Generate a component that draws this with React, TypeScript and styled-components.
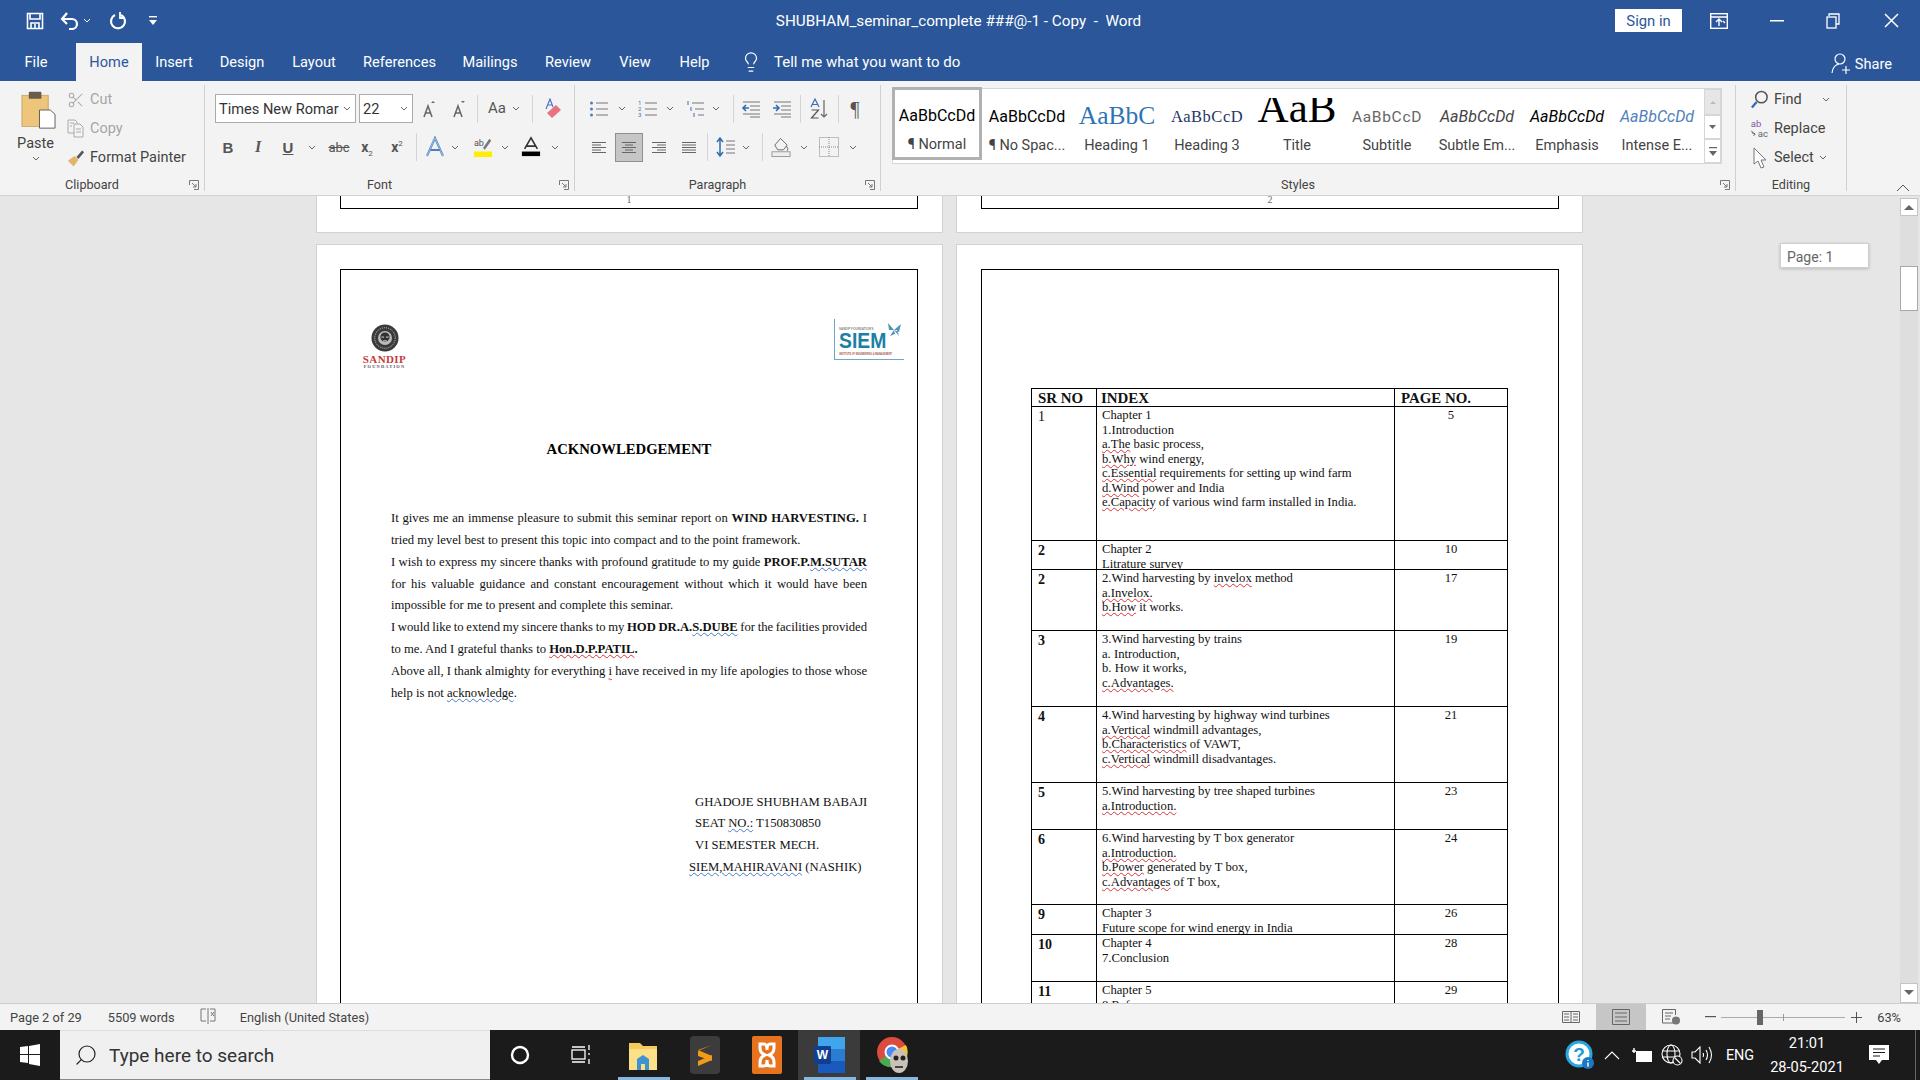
import React from "react";
import styled, { createGlobalStyle } from "styled-components";
import { Lightbulb, Search, Scissors } from "lucide-react";

const Global = createGlobalStyle`
  html, body { margin: 0; padding: 0; width: 1920px; height: 1080px; overflow: hidden; background: #e6e6e6; }
  * { box-sizing: border-box; }
  #root { width: 1920px; height: 1080px; }
`;
const UI = `Roboto, "Liberation Sans", sans-serif`;
const DOC = `"Liberation Serif", "Times New Roman", serif`;

const Shell = styled.div`display:flex;flex-direction:column;width:1920px;height:1080px;overflow:hidden;font-family:${UI};`;
const Blue = styled.header`background:#2b579a;height:81px;display:flex;flex-direction:column;color:#fff;flex:none;`;
const TitleBar = styled.div`height:41px;display:grid;grid-template-columns:1fr 380px 1fr;align-items:center;`;
const Qat = styled.div`display:flex;align-items:center;padding-left:25px;`;
const WinTools = styled.div`display:flex;align-items:center;justify-content:flex-end;`;
const DocTitle = styled.div`font-size:15.25px;text-align:center;white-space:pre;margin-left:-3px;`;
const SignIn = styled.div`width:67px;height:23px;background:#fff;color:#2b579a;font-size:14.8px;display:flex;align-items:center;justify-content:center;margin-right:18px;`;
const WinBtn = styled.div<{ $w: number; $mr?: number }>`width:${p => p.$w}px;margin-right:${p => p.$mr ?? 0}px;display:flex;justify-content:center;align-items:center;`;
const Cell = styled.div<{ $w?: number; $ml?: number; $active?: boolean }>`
  width:${p => p.$w ?? 20}px;margin-left:${p => p.$ml ?? 0}px;height:${p => p.$active ? 29 : 22}px;flex:none;display:flex;align-items:center;justify-content:center;
  color:#555;font-size:14px;
  ${p => p.$active ? "background:#c6c6c6;border:1px solid #8f8f8f;" : ""}
`;
const TabRow = styled.nav`height:40px;display:flex;align-items:flex-end;`;
const Tab = styled.div<{ $w: number; $on?: boolean; $pr?: number }>`
  width:${p => p.$w}px;height:38px;display:flex;align-items:center;justify-content:center;font-size:14.6px;padding:0 ${p => p.$pr ?? 0}px 1px 0;
  ${p => p.$on ? "background:#f3f3f3;color:#2b579a;" : "color:#fff;"}
`;
const TellMe = styled.div`display:flex;align-items:center;gap:12px;height:38px;margin-left:16px;font-size:15px;flex:1;`;
const Share = styled.div`display:flex;align-items:center;gap:4px;height:38px;margin-right:28px;font-size:14.6px;padding-top:3px;`;

const Ribbon = styled.section`height:115px;background:#f3f3f3;border-bottom:1px solid #d2d2d2;display:flex;padding-top:4px;flex:none;color:#444;position:relative;`;
const Group = styled.div<{ $w: number }>`width:${p => p.$w}px;height:106px;border-right:1px solid #d0d0d0;display:flex;flex-direction:column;flex:none;`;
const GroupBody = styled.div<{ $pl?: number }>`height:89px;flex:none;display:flex;padding-left:${p => p.$pl ?? 0}px;`;
const Stack = styled.div<{ $pt?: number }>`display:flex;flex-direction:column;padding-top:${p => p.$pt ?? 0}px;`;
const GroupLabel = styled.div`height:21px;flex:none;display:flex;align-items:center;font-size:12.6px;color:#444;`;
const LabelText = styled.span`flex:1;text-align:center;`;
const Launcher = styled.span`width:20px;display:flex;justify-content:center;`;
const Row = styled.div<{ $h: number }>`height:${p => p.$h}px;display:flex;align-items:center;flex:none;`;
const PasteCol = styled.div`width:61px;margin-left:5px;display:flex;flex-direction:column;align-items:center;padding:6px 0 0 6px;font-size:14.5px;color:#444;`;
const PasteLabel = styled.span`margin:5px 0 0 -6px;line-height:20px;`;
const PasteChev = styled.span`margin:2px 0 0 -6px;display:flex;`;
const ClipRow = styled.div<{ $off?: boolean }>`height:29px;display:flex;align-items:center;gap:5px;font-size:14.5px;color:${p => p.$off ? "#a6a6a6" : "#444"};`;
const ClipIcon = styled.span`width:19px;display:flex;justify-content:center;`;
const FontBox = styled.div<{ $w: number; $ml?: number }>`
  width:${p => p.$w}px;margin-left:${p => p.$ml ?? 0}px;height:29px;background:#fff;border:1px solid #ababab;display:flex;align-items:center;justify-content:space-between;
  padding:0 4px 0 3px;font-size:14.6px;color:#333;white-space:nowrap;overflow:hidden;flex:none;
`;
const Sep = styled.div<{ $ml: number; $h?: number }>`width:1px;height:${p => p.$h ?? 28}px;margin-left:${p => p.$ml}px;background:#d4d4d4;flex:none;`;
const Letter = styled.span<{ $s?: number; $b?: boolean; $i?: boolean; $u?: boolean; $st?: boolean; $f?: string }>`
  font-size:${p => p.$s ?? 15}px;font-weight:${p => p.$b ? 700 : 400};font-style:${p => p.$i ? "italic" : "normal"};
  text-decoration:${p => p.$u ? "underline" : p.$st ? "line-through" : "none"};color:#555;line-height:1;white-space:nowrap;
  ${p => p.$f ? `font-family:${p.$f};` : ""}
  sub, sup { font-size:8px; font-weight:400; line-height:0; }
`;
const Gallery = styled.div`margin:3px 0 0 11px;width:830px;height:76px;background:#fff;border:1px solid #d6d6d6;display:flex;flex:none;`;
const StyleItem = styled.div<{ $on?: boolean }>`
  width:90px;flex:none;height:74px;display:flex;flex-direction:column;align-items:center;overflow:hidden;
  ${p => p.$on ? "border:3px solid #b1b1b1;margin:-2px 0 0 -1px;height:73px;" : "padding-top:2px;"}
`;
const Preview = styled.div<{ $f?: string; $s: number; $c?: string; $i?: boolean; $ls?: number; $pb?: number; $clip?: number }>`
  height:${p => 34 - (p.$clip ?? 0)}px;width:78px;flex:none;display:flex;align-items:flex-end;justify-content:center;overflow:hidden;white-space:nowrap;margin-top:${p => 5 + (p.$clip ?? 0)}px;line-height:1;padding-bottom:${p => p.$pb ?? 5}px;
  font-family:${p => p.$f ?? UI};font-size:${p => p.$s}px;color:${p => p.$c ?? "#000"};font-style:${p => p.$i ? "italic" : "normal"};letter-spacing:${p => p.$ls ?? 0}px;
`;
const StyleName = styled.div`font-size:14.5px;color:#444;margin-top:7px;white-space:nowrap;line-height:18px;`;
const GalleryScroll = styled.div`margin-left:2px;width:18px;display:flex;flex-direction:column;`;
const ScrollPart = styled.div<{ $h: number; $off?: boolean }>`height:${p => p.$h}px;border:1px solid #d6d6d6;background:${p => p.$off ? "#e6e6e6" : "#fff"};display:flex;align-items:center;justify-content:center;`;
const EditRow = styled.div`height:29px;display:flex;align-items:center;gap:5px;font-size:14.5px;color:#444;padding-left:14px;`;
const Collapse = styled.span`position:absolute;right:10px;bottom:3px;display:flex;`;

const Canvas = styled.main`flex:1;min-height:0;display:flex;background:#e6e6e6;overflow:hidden;position:relative;`;
const DocArea = styled.div`flex:1;min-width:0;overflow:hidden;padding-left:316px;display:grid;grid-template-columns:627px 627px;column-gap:13px;grid-template-rows:37px 1fr;row-gap:11px;`;
const Page = styled.div<{ $stub?: boolean; $right?: boolean }>`
  background:#fff;border:1px solid #d2d2d2;
  ${p => p.$stub ? "border-top:none;" : "height:900px;"}
  padding:${p => p.$stub ? 0 : 24}px ${p => p.$right ? 23 : 24}px 0 ${p => p.$right ? 24 : 23}px;
`;
const StubFrame = styled.div`height:13px;border:solid #000;border-width:0 1.5px 1.5px;text-align:center;font:10px/8px ${DOC};color:#666;`;
const Frame = styled.div`border:1.5px solid #000;height:860px;`;
const Logos = styled.div`display:flex;justify-content:space-between;align-items:flex-start;padding:54px 13px 0 20px;height:100px;`;
const SandipLogo = styled.div`width:47px;display:flex;flex-direction:column;align-items:center;`;
const SandipName = styled.div`font:700 11px/10px ${DOC};color:#c9383a;letter-spacing:.4px;margin-top:2px;`;
const SandipSub = styled.div`font:700 4.4px/5px ${DOC};color:#555;letter-spacing:1.2px;white-space:nowrap;`;
const SiemLogo = styled.div`width:70px;height:41px;border-left:1px solid #6fa8c7;border-bottom:1px solid #6fa8c7;display:flex;flex-direction:column;padding:9px 0 0 4px;position:relative;margin-top:-5px;`;
const SiemTiny = styled.div`font:700 3px/3px "Liberation Sans",sans-serif;color:#888;white-space:nowrap;`;
const SiemName = styled.div`font:700 22px/20px "Liberation Sans",sans-serif;color:#1b7fa6;transform:scaleX(.88);transform-origin:left;`;
const SiemSub = styled.div`font:700 3px/5px "Liberation Sans",sans-serif;color:#a55;white-space:nowrap;margin-top:1px;transform:scaleX(.78);transform-origin:left;`;
const SiemWing = styled.svg`position:absolute;right:1px;top:2px;`;
const Heading = styled.h1`font:700 14.7px/18px ${DOC};color:#000;text-align:center;margin:70px 0 0;`;
const Body = styled.div`margin:50px 50px 0;font:12.66px/21.85px ${DOC};color:#111;`;
const Para = styled.div`text-align:justify;text-align-last:left;`;
const JLine = styled.div<{ $ws?: number }>`text-align:justify;text-align-last:justify;white-space:nowrap;word-spacing:${p => p.$ws ?? 0}px;`;
const Sig = styled.div`margin:87px 0 0 354px;font:12.66px/21.85px ${DOC};color:#111;white-space:nowrap;`;
const SigShift = styled.div`margin-left:-6px;`;
const Sq = styled.span<{ $b?: boolean }>`text-decoration:underline wavy ${p => p.$b ? "#4a78c8" : "#d8333a"} 1px;text-underline-offset:1px;`;
const Table = styled.table`border-collapse:collapse;table-layout:fixed;width:476px;margin:118px 0 0 49px;font:12.65px/14.55px ${DOC};color:#111;`;
const Td = styled.td`border:1px solid #000;padding:0;vertical-align:top;`;
const CellBox = styled.div<{ $h: number; $center?: boolean }>`height:${p => p.$h}px;overflow:hidden;padding:1px 2px 0 5px;white-space:nowrap;${p => p.$center ? "text-align:center;padding-left:2px;" : ""}`;
const Head = styled.div<{ $ml?: number }>`font:700 14.9px/16px ${DOC};color:#111;margin-left:${p => p.$ml ?? 0}px;`;
const Sr = styled.div<{ $b?: boolean }>`font:${p => p.$b ? 700 : 400} 14px/16px ${DOC};color:#111;padding:1px 0 0 1px;`;
const Line = styled.div``;

const Scrollbar = styled.aside`width:20px;flex:none;padding:2px 2px 0 0;display:flex;flex-direction:column;background:#e6e6e6;`;
const SbTrack = styled.div`flex:1;background:#dedede;padding-top:50px;`;
const SbBtn = styled.div<{ $h: number }>`height:${p => p.$h}px;flex:none;background:#fff;border:1px solid #c4c4c4;display:flex;align-items:center;justify-content:center;`;
const SbThumb = styled.div`height:45px;background:#fff;border:1px solid #a8a8a8;`;
const PageTip = styled.div`position:absolute;left:1780px;top:47px;width:89px;height:25px;background:#fff;border:1px solid #cfcfcf;box-shadow:0 1px 3px rgba(0,0,0,.2);font-size:14px;color:#666;padding:5px 0 0 6px;`;

const Status = styled.footer`height:27px;background:#f3f3f3;border-top:1px solid #cdcdcd;display:flex;align-items:center;flex:none;font-size:12.8px;color:#444;`;
const StatusText = styled.span<{ $ml: number }>`margin-left:${p => p.$ml}px;white-space:nowrap;`;
const ViewBtn = styled.div<{ $w: number; $on?: boolean }>`width:${p => p.$w}px;height:26px;display:flex;align-items:center;justify-content:center;flex:none;${p => p.$on ? "background:#c6c6c6;" : ""}`;
const Grow = styled.div`flex:1;`;
const Slider = styled.div`width:124px;height:1px;background:#aaa;margin:0 5px;position:relative;`;
const Thumb = styled.i`position:absolute;left:36px;top:-7px;width:6px;height:15px;background:#666;`;
const Tick = styled.i`position:absolute;left:62px;top:-3px;width:1px;height:7px;background:#999;`;

const Taskbar = styled.footer`height:50px;background:#1b1b1b;display:flex;align-items:center;flex:none;color:#fff;`;
const TbCell = styled.div<{ $w: number }>`width:${p => p.$w}px;height:50px;display:flex;align-items:center;justify-content:center;flex:none;`;
const SearchBox = styled.div`width:430px;height:50px;background:#f0f0f0;display:flex;align-items:center;gap:11px;padding-left:14px;color:#333;font-size:19px;flex:none;border-top:1px solid #ddd;border-bottom:1px solid #888;`;
const AppCell = styled.div<{ $open?: boolean; $active?: boolean; $pl?: number }>`
  width:62px;height:50px;display:flex;align-items:center;justify-content:center;flex:none;position:relative;padding-left:${p => p.$pl ?? 0}px;
  ${p => p.$active ? "background:#3b3b3b;" : ""}
  ${p => p.$open ? "&::after{content:'';position:absolute;left:6px;right:4px;bottom:0;height:3px;background:#86b9e0;}" : ""}
`;
const Eng = styled.div`width:46px;text-align:center;font-size:14.4px;color:#fff;flex:none;`;
const Clock = styled.div`width:88px;text-align:center;font-size:14.6px;line-height:24px;flex:none;`;
const DeskEdge = styled.div`width:13px;height:50px;flex:none;border-left:0;position:relative;&::before{content:'';position:absolute;left:8px;top:0;bottom:0;width:1px;background:#666;}`;

const Chev = ({ c = "#666" }: { c?: string }) => <svg width="8" height="5" viewBox="0 0 8 5"><path d="M1 1l3 3 3-3" fill="none" stroke={c} strokeWidth="1" /></svg>;
const Launch = () => <svg width="10" height="10" viewBox="0 0 10 10" fill="none" stroke="#777"><path d="M.5 5V.5H9.5V9.5H5" /><path d="M3 3l4 4M7 4v3H4" /></svg>;
const Lines = ({ k }: { k: "l" | "c" | "r" | "j" }) => {
  const w: number[] = k === "j" ? [14, 14, 14, 14, 14] : k === "c" ? [14, 8, 14, 8, 14] : [14, 9, 14, 9, 14];
  return <svg width="16" height="14" viewBox="0 0 16 14" stroke="#666">{w.map((n, i) => {
    const x = k === "l" ? 1 : k === "r" ? 15 - n : (16 - n) / 2;
    return <path key={i} d={`M${x} ${2.5 + i * 2.5}h${n}`} />;
  })}</svg>;
};
const Fnt = ({ up }: { up: boolean }) => <svg width="14" height="18" viewBox="0 0 14 18"><path d="M2 17L6 6l4 11M3.5 13h5" fill="none" stroke="#666" strokeWidth="1.5" /><path d={up ? "M9 3l2-2 2 2z" : "M9 1h4l-2 2z"} fill="#666" /></svg>;
const Bullets = ({ n }: { n?: boolean }) => <svg width="20" height="20" viewBox="0 0 20 20">
  {[4, 10, 16].map((y, i) => <g key={y}><path d={`M7 ${y}h12`} stroke="#777" />{n ? <text x="0" y={y + 2} fontSize="6" fill="#3f6fb0" fontFamily="Roboto">{i + 1}</text> : <circle cx="2.5" cy={y} r="1.5" fill="#4f7db8" />}</g>)}
</svg>;
const Multi = () => <svg width="20" height="20" viewBox="0 0 20 20" stroke="#777"><path d="M5 4h12M8 10h9M11 16h6" /><path d="M1 2v4M4 8v4M7 14v4" stroke="#3f6fb0" /></svg>;
const Indent = ({ inc }: { inc?: boolean }) => <svg width="20" height="18" viewBox="0 0 20 18" stroke="#777"><path d="M2 2h17M9 6h10M9 10h10M2 14h17M9 17h10" /><path d={inc ? "M1 8h5M4 5l3 3-3 3" : "M8 8H3M5 5L2 8l3 3"} fill="none" stroke="#2f6db5" strokeWidth="1.6" /></svg>;
const Sort = () => <svg width="20" height="22" viewBox="0 0 20 22"><path d="M1 9l4-8 4 8M2.5 6.5h5" fill="none" stroke="#3f6fb0" strokeWidth="1.2" /><path d="M1.5 12h7l-7 8h7" fill="none" stroke="#555" strokeWidth="1.2" /><path d="M14 2v17M11 16l3 3 3-3" fill="none" stroke="#666" strokeWidth="1.2" /></svg>;
const LineSp = () => <svg width="20" height="22" viewBox="0 0 20 22"><path d="M4 2v18M1 6l3-4 3 4M1 16l3 4 3-4" fill="none" stroke="#2f6db5" strokeWidth="1.5" /><path d="M10 5h9M10 9h9M10 13h9M10 17h9" stroke="#777" /></svg>;
const Shade = () => <svg width="21" height="22" viewBox="0 0 21 22"><path d="M10 2l7 7-4 5H7L4 9z" fill="none" stroke="#666" /><path d="M16 10q3 3 1 5" fill="none" stroke="#666" /><rect x="1" y="16" width="19" height="5" fill="#eee" stroke="#999" /></svg>;
const Borders = () => <svg width="20" height="20" viewBox="0 0 20 20" stroke="#888" strokeDasharray="1 1" fill="none"><rect x=".5" y=".5" width="19" height="19" /><path d="M10 0v20M0 10h20" /></svg>;
const Clear = () => <svg width="20" height="22" viewBox="0 0 20 22"><path d="M4 11L8 1l3 8M5 7h5" fill="none" stroke="#4a78c8" strokeWidth="1.2" /><path d="M5 15l9-8 5 5-9 8z" fill="#e8727f" /></svg>;
const HL = () => <svg width="22" height="24" viewBox="0 0 22 24"><text x="1" y="11" fontSize="10" fill="#555" fontFamily="Roboto">ab</text><path d="M11 13l7-10 2 2-7 10z" fill="#777" /><rect x="1" y="17" width="20" height="6" fill="#ffee00" /></svg>;
const FontA = () => <svg width="22" height="24" viewBox="0 0 22 24"><path d="M4 14L11 2l7 12M6 11h10" fill="none" stroke="#333" strokeWidth="1.8" /><rect x="1" y="17" width="20" height="5" fill="#000" /></svg>;
const TextFx = () => <svg width="20" height="24" viewBox="0 0 20 24"><path d="M2 21L10 3l8 18M5.5 15h9" fill="none" stroke="#4a7fc0" strokeWidth="2" /><path d="M2 21L10 3l8 18" fill="none" stroke="#d7e6f6" strokeWidth=".6" /></svg>;

const Paste = () => <svg width="35" height="38" viewBox="0 0 36 44" preserveAspectRatio="none"><rect x="1" y="5" width="27" height="36" fill="#edc67c" stroke="#c9a565" /><rect x="8" y="1" width="13" height="8" rx="1" fill="#6b5b4a" /><path d="M19 22h11l5 5v16H19z" fill="#fff" stroke="#555" /></svg>;
const CopyI = () => <svg width="17" height="19" viewBox="0 0 17 19" fill="none" stroke="#aaa"><path d="M1 1h7l2 2v11H1z" /><path d="M7 5h6l3 3v10H7z" fill="#f3f3f3" /><path d="M3 4h4M3 7h2M9 10h5M9 13h5" /></svg>;
const Painter = () => <svg width="20" height="20" viewBox="0 0 20 20"><path d="M11 9l6-7 2 2-6 7z" fill="#555" /><path d="M2 13l7-5 4 4-5 7z" fill="#e2b56b" /></svg>;
const FindI = () => <svg width="20" height="22" viewBox="0 0 20 22" fill="none"><circle cx="12" cy="8" r="6" stroke="#555" strokeWidth="1.6" /><path d="M7 13l-5 6" stroke="#2f6db5" strokeWidth="2.4" /></svg>;
const ReplaceI = () => <svg width="22" height="22" viewBox="0 0 22 22"><text x="1" y="9" fontSize="11" fill="#7a5ba8" fontFamily="Roboto">ab</text><text x="9" y="20" fontSize="11" fill="#666" fontFamily="Roboto">ac</text><path d="M2 13q0 4 4 4M4 15l2 2-2 2" fill="none" stroke="#555" /></svg>;
const SelectI = () => <svg width="18" height="22" viewBox="0 0 18 22"><path d="M3 1v16l4-3 3 7 3-1-3-7h5z" fill="#fff" stroke="#777" /></svg>;

const SaveI = () => <svg width="18" height="18" viewBox="0 0 18 18" fill="none" stroke="#fff" strokeWidth="1.6"><path d="M1.5 1.5h15v15h-15z" /><path d="M4 2v5h10V2M5 16v-5h8v5" /><path d="M9 12v4" /></svg>;
const UndoI = () => <svg width="20" height="18" viewBox="0 0 20 18" fill="none" stroke="#fff" strokeWidth="2.2"><path d="M2 7h10a5 5 0 010 10H9" /><path d="M7 1L2 7l5 5" /></svg>;
const RedoI = () => <svg width="18" height="20" viewBox="0 0 18 20" fill="none" stroke="#fff" strokeWidth="2.2"><path d="M6 4a7 7 0 106 0" /><path d="M11 1v6h5" strokeWidth="1.8" /></svg>;
const CustomI = () => <svg width="8" height="10" viewBox="0 0 8 10" fill="#fff"><rect y="0" width="8" height="1.4" /><path d="M0 4h8L4 9z" /></svg>;
const RibbonOpt = () => <svg width="18" height="16" viewBox="0 0 18 16" fill="none" stroke="#fff" strokeWidth="1.4"><rect x=".7" y=".7" width="16.6" height="14.6" /><path d="M1 4h16M9 13V7M6 9l3-3 3 3M13 8l2 2" /></svg>;
const Shareico = () => <svg width="20" height="22" viewBox="0 0 20 22" fill="none" stroke="#fff" strokeWidth="1.2"><circle cx="9" cy="6" r="5" /><path d="M1 20q1-8 7-9M15 13v8M11 17h8" /></svg>;

const SandipSeal = () => <svg width="28" height="28" viewBox="0 0 30 30"><circle cx="15" cy="15" r="14.5" fill="#3a3a3a" /><circle cx="15" cy="15" r="11" fill="none" stroke="#ddd" strokeWidth="1" strokeDasharray="1 1.2" /><circle cx="15" cy="15" r="7.5" fill="#bbb" /><circle cx="15" cy="14" r="5" fill="#333" /><path d="M11 14h3M16 14h3M13 18h4" stroke="#ddd" /></svg>;

const Folder = () => <svg width="30" height="32" viewBox="0 0 30 32"><path d="M1 4h11l3 3h14v24H1z" fill="#f5c95a" /><path d="M1 10h28v21H1z" fill="#fbe08a" /><path d="M9 31V20l6-4 6 4v11h-4v-6h-4v6z" fill="#3f93d1" /></svg>;
const Sublime = () => <svg width="30" height="38" viewBox="0 0 30 38"><rect width="30" height="38" rx="4" fill="#3c3c3c" /><path d="M22 9L8 15v5l14 5v-5L8 14M22 19L8 25v5l14-6z" fill="#f09a17" /></svg>;
const Xampp = () => <svg width="30" height="38" viewBox="0 0 30 38"><rect width="30" height="38" rx="2" fill="#e8731e" /><path d="M8 8h4q3 0 3 6 0-6 3-6h4v4q0 5-5 7 5 2 5 7v4h-4q-3 0-3-6 0 6-3 6H8v-4q0-5 5-7-5-2-5-7z" fill="none" stroke="#fff" strokeWidth="3" /></svg>;
const WordI = () => <svg width="32" height="36" viewBox="0 0 32 36"><rect x="4" y="0" width="27" height="12" fill="#41a5ee" /><rect x="4" y="12" width="27" height="12" fill="#2b7cd3" /><rect x="4" y="24" width="27" height="12" fill="#185abd" /><rect x="0" y="9" width="17" height="18" rx="1" fill="#103f91" /><text x="8.5" y="22" fontSize="12" fontWeight="700" fill="#fff" fontFamily="Liberation Sans" textAnchor="middle">W</text></svg>;
const Chrome = () => <svg width="34" height="40" viewBox="0 0 34 40"><circle cx="15" cy="17" r="15" fill="#dd4b3e" /><path d="M15 17L2 26a15 15 0 0014 6z" fill="#4ca853" /><path d="M15 17l1 15a15 15 0 0013-22z" fill="#f6c533" /><circle cx="15" cy="17" r="6.5" fill="#4a8af4" stroke="#fff" strokeWidth="2" /><ellipse cx="22" cy="26" rx="9" ry="12" fill="#c9c2b8" /><circle cx="19" cy="23" r="2.5" fill="#222" /><circle cx="26" cy="23" r="2.5" fill="#222" /><path d="M18 32h8" stroke="#444" strokeWidth="2" /></svg>;
const WinLogo = () => <svg width="20" height="22" viewBox="0 0 20 22" fill="#fff"><path d="M0 3l8-1v8H0zM9 2l11-2v10H9zM0 11h8v8l-8-1zM9 11h11v11l-11-2z" /></svg>;
const TaskView = () => <svg width="20" height="22" viewBox="0 0 20 22" fill="none" stroke="#fff" strokeWidth="1.3"><rect x="1" y="6" width="13" height="9" /><path d="M1 3h13M1 18h13M18 1v5M18 9v2M18 15v5" /></svg>;
const Help = () => <svg width="30" height="30" viewBox="0 0 30 30"><circle cx="14" cy="14" r="12" fill="#fff" stroke="#2aa7e0" strokeWidth="3" /><text x="14" y="20.5" fontSize="19" fontWeight="700" fill="#1c9ad6" fontFamily="Liberation Sans" textAnchor="middle">?</text><circle cx="23" cy="23" r="6" fill="#1b78c2" /><path d="M23 20v1M23 22.5v4" stroke="#fff" strokeWidth="1.5" /></svg>;
const Battery = () => <svg width="22" height="16" viewBox="0 0 22 16" fill="none" stroke="#fff"><rect x="5.5" y="4.5" width="15" height="10" fill="#fff" /><path d="M1 4h4M3 1v3M3 4v2" strokeWidth="1.4" /></svg>;
const Globe = () => <svg width="22" height="22" viewBox="0 0 22 22" fill="none" stroke="#fff" strokeWidth="1.1"><circle cx="10" cy="10" r="9" /><ellipse cx="10" cy="10" rx="4" ry="9" /><path d="M1 7h18M1 13h18" /><circle cx="16.5" cy="16.5" r="4.5" fill="#1b1b1b" /><path d="M13.5 13.5l6 6" /></svg>;
const Speaker = () => <svg width="22" height="18" viewBox="0 0 22 18" fill="none" stroke="#fff" strokeWidth="1.1"><path d="M1 6h3l5-5v16l-5-5H1z" /><path d="M12 7q1 2 0 4M15 4q3 5 0 10M18 1q5 8 0 16" /></svg>;
const Notif = () => <svg width="20" height="20" viewBox="0 0 20 20"><path d="M0 0h20v15h-7l-3 4-3-4H0z" fill="#fff" /><path d="M4 4h12M4 7.5h12M4 11h7" stroke="#1b1b1b" /></svg>;
const ReadI = () => <svg width="18" height="14" viewBox="0 0 18 14" fill="none" stroke="#666"><path d="M.5 1.5h17v11H.5zM9 1v12M2 4h5M2 7h5M2 10h5M11 4h5M11 7h5M11 10h5" /></svg>;
const PrintI = () => <svg width="18" height="16" viewBox="0 0 18 16" fill="none" stroke="#666"><path d="M.5.5h17v15H.5zM3 4h12M3 8h12M3 12h12" /></svg>;
const WebI = () => <svg width="18" height="16" viewBox="0 0 18 16" fill="none" stroke="#666"><path d="M13 14H.5V.5h13V6M3 4h8M3 7h6M3 10h5" /><circle cx="14" cy="11.5" r="4" fill="#777" stroke="none" /></svg>;

const rows: { sr: React.ReactNode; bold: boolean; h: number; pg: string; lines: React.ReactNode[] }[] = [
  { sr: "1", bold: false, h: 133, pg: "5", lines: ["Chapter 1", "1.Introduction", <><Sq>a.The</Sq> basic process,</>, <><Sq>b.Why</Sq> wind energy,</>, <><Sq>c.Essential</Sq> requirements for setting up wind farm</>, <><Sq>d.Wind</Sq> power and India</>, <><Sq>e.Capacity</Sq> of various wind farm installed in India.</>] },
  { sr: "2", bold: true, h: 28, pg: "10", lines: ["Chapter 2", <><Sq>Litrature</Sq> survey</>] },
  { sr: "2", bold: true, h: 60, pg: "17", lines: [<>2.Wind harvesting by <Sq>invelox</Sq> method</>, <Sq>a.Invelox.</Sq>, <><Sq>b.How</Sq> it works.</>] },
  { sr: "3", bold: true, h: 75, pg: "19", lines: ["3.Wind harvesting by trains", "a. Introduction,", "b. How it works,", <Sq>c.Advantages.</Sq>] },
  { sr: "4", bold: true, h: 75, pg: "21", lines: ["4.Wind harvesting by highway wind turbines", <><Sq>a.Vertical</Sq> windmill advantages,</>, <><Sq>b.Characteristics</Sq> of VAWT,</>, <><Sq>c.Vertical</Sq> windmill disadvantages.</>] },
  { sr: "5", bold: true, h: 46, pg: "23", lines: ["5.Wind harvesting by tree shaped turbines", <Sq>a.Introduction.</Sq>] },
  { sr: "6", bold: true, h: 74, pg: "24", lines: ["6.Wind harvesting by T box generator", <Sq>a.Introduction.</Sq>, <><Sq>b.Power</Sq> generated by T box,</>, <><Sq>c.Advantages</Sq> of T box,</>] },
  { sr: "9", bold: true, h: 29, pg: "26", lines: ["Chapter 3", "Future scope for wind energy in India"] },
  { sr: "10", bold: true, h: 46, pg: "28", lines: ["Chapter 4", "7.Conclusion"] },
  { sr: "11", bold: true, h: 46, pg: "29", lines: ["Chapter 5", "8.References"] },
];

const styleItems = [
  { n: "¶ Normal", s: 16, on: true },
  { n: "¶ No Spac...", s: 16 },
  { n: "Heading 1", s: 25.5, f: DOC, c: "#2e74b5", pb: 2 },
  { n: "Heading 3", s: 16.5, f: DOC, c: "#1f3763", ls: .5, pb: 5 },
  { n: "Title", s: 43, f: DOC, pb: 1, clip: 2 },
  { n: "Subtitle", s: 15.5, c: "#666", ls: 0.7 },
  { n: "Subtle Em...", s: 16, c: "#444", i: true },
  { n: "Emphasis", s: 16, i: true },
  { n: "Intense E...", s: 16, c: "#4f81bd", i: true },
];
const previewText: Record<string, string> = { "Heading 1": "AaBbC", "Heading 3": "AaBbCcD", Title: "AaB", Subtitle: "AaBbCcD" };

export default function App() {
  return (
    <Shell>
      <Global />
      <Blue>
        <TitleBar>
          <Qat>
            <Cell $w={20}><SaveI /></Cell>
            <Cell $w={20} $ml={15}><UndoI /></Cell>
            <Cell $w={8} $ml={3}><Chev c="#fff" /></Cell>
            <Cell $w={20} $ml={17}><RedoI /></Cell>
            <Cell $w={10} $ml={20}><CustomI /></Cell>
          </Qat>
          <DocTitle>SHUBHAM_seminar_complete ###@-1 - Copy  -  Word</DocTitle>
          <WinTools>
            <SignIn>Sign in</SignIn>
            <WinBtn $w={38} $mr={12}><RibbonOpt /></WinBtn>
            <WinBtn $w={54}><svg width="14" height="2"><rect width="14" height="1.5" fill="#fff" /></svg></WinBtn>
            <WinBtn $w={58}><svg width="14" height="16" viewBox="0 0 14 16" fill="none" stroke="#fff" strokeWidth="1.3"><path d="M3 3V1h10v10h-3" /><rect x="1" y="4" width="9" height="11" /></svg></WinBtn>
            <WinBtn $w={58}><svg width="15" height="15" viewBox="0 0 15 15" stroke="#fff" strokeWidth="1.5"><path d="M1 1l13 13M14 1L1 14" /></svg></WinBtn>
          </WinTools>
        </TitleBar>
        <TabRow>
          <Tab $w={76} $pr={4}>File</Tab>
          <Tab $w={66} $on>Home</Tab>
          <Tab $w={64}>Insert</Tab>
          <Tab $w={72}>Design</Tab>
          <Tab $w={72}>Layout</Tab>
          <Tab $w={99}>References</Tab>
          <Tab $w={82}>Mailings</Tab>
          <Tab $w={74}>Review</Tab>
          <Tab $w={60}>View</Tab>
          <Tab $w={59}>Help</Tab>
          <TellMe><Lightbulb size={22} strokeWidth={1.3} color="#fff" />Tell me what you want to do</TellMe>
          <Share><Shareico />Share</Share>
        </TabRow>
      </Blue>

      <Ribbon>
        <Group $w={205}>
          <GroupBody>
            <PasteCol><Paste /><PasteLabel>Paste</PasteLabel><PasteChev><Chev /></PasteChev></PasteCol>
            <Stack>
              <ClipRow $off><ClipIcon><Scissors size={18} color="#aaa" strokeWidth={1.4} /></ClipIcon>Cut</ClipRow>
              <ClipRow $off><ClipIcon><CopyI /></ClipIcon>Copy</ClipRow>
              <ClipRow><ClipIcon><Painter /></ClipIcon>Format Painter</ClipRow>
            </Stack>
          </GroupBody>
          <GroupLabel><LabelText>Clipboard</LabelText><Launcher><Launch /></Launcher></GroupLabel>
        </Group>
        <Group $w={370}>
          <GroupBody $pl={10}>
            <Stack $pt={9}>
              <Row $h={29}>
                <FontBox $w={141}>Times New Romar<Chev /></FontBox>
                <FontBox $w={54} $ml={3}>22<Chev /></FontBox>
                <Cell $ml={6}><Fnt up /></Cell>
                <Cell $ml={10}><Fnt up={false} /></Cell>
                <Sep $ml={8} />
                <Cell $ml={9}><Letter $s={15}>Aa</Letter></Cell>
                <Cell $w={8} $ml={5}><Chev /></Cell>
                <Sep $ml={12} />
                <Cell $ml={9}><Clear /></Cell>
              </Row>
              <Row $h={48}>
                <Cell $ml={3}><Letter $b $f={`"Liberation Sans"`}>B</Letter></Cell>
                <Cell $ml={10}><Letter $i $b $f={DOC} $s={16}>I</Letter></Cell>
                <Cell $ml={10}><Letter $b $u $f={`"Liberation Sans"`}>U</Letter></Cell>
                <Cell $w={8} $ml={10}><Chev /></Cell>
                <Cell $ml={13}><Letter $st $s={13}>abc</Letter></Cell>
                <Cell $ml={8}><Letter $b $s={14}>x<sub>2</sub></Letter></Cell>
                <Cell $ml={10}><Letter $b $s={14}>x<sup>2</sup></Letter></Cell>
                <Sep $ml={9} />
                <Cell $ml={8}><TextFx /></Cell>
                <Cell $w={8} $ml={6}><Chev /></Cell>
                <Cell $ml={14}><HL /></Cell>
                <Cell $w={8} $ml={8}><Chev /></Cell>
                <Cell $ml={12}><FontA /></Cell>
                <Cell $w={8} $ml={10}><Chev /></Cell>
              </Row>
            </Stack>
          </GroupBody>
          <GroupLabel><LabelText>Font</LabelText><Launcher><Launch /></Launcher></GroupLabel>
        </Group>
        <Group $w={306}>
          <GroupBody $pl={13}>
            <Stack $pt={9}>
              <Row $h={29}>
                <Cell $w={21}><Bullets /></Cell>
                <Cell $w={8} $ml={9}><Chev /></Cell>
                <Cell $ml={12}><Bullets n /></Cell>
                <Cell $w={8} $ml={8}><Chev /></Cell>
                <Cell $ml={13}><Multi /></Cell>
                <Cell $w={8} $ml={5}><Chev /></Cell>
                <Sep $ml={13} />
                <Cell $ml={7}><Indent /></Cell>
                <Cell $ml={11}><Indent inc /></Cell>
                <Sep $ml={8} />
                <Cell $ml={9}><Sort /></Cell>
                <Sep $ml={8} />
                <Cell $ml={6}><Letter $s={20} $f={DOC}>¶</Letter></Cell>
              </Row>
              <Row $h={48}>
                <Cell $ml={1}><Lines k="l" /></Cell>
                <Cell $w={28} $ml={6} $active><Lines k="c" /></Cell>
                <Cell $ml={6}><Lines k="r" /></Cell>
                <Cell $ml={10}><Lines k="j" /></Cell>
                <Sep $ml={8} />
                <Cell $ml={8}><LineSp /></Cell>
                <Cell $w={8} $ml={6}><Chev /></Cell>
                <Sep $ml={12} />
                <Cell $ml={8}><Shade /></Cell>
                <Cell $w={8} $ml={9}><Chev /></Cell>
                <Cell $ml={11}><Borders /></Cell>
                <Cell $w={8} $ml={10}><Chev /></Cell>
              </Row>
            </Stack>
          </GroupBody>
          <GroupLabel><LabelText>Paragraph</LabelText><Launcher><Launch /></Launcher></GroupLabel>
        </Group>
        <Group $w={855}>
          <GroupBody>
            <Gallery>
              {styleItems.map(s => (
                <StyleItem key={s.n} $on={s.on}>
                  <Preview $s={s.s} $f={s.f} $c={s.c} $i={s.i} $ls={s.ls} $pb={s.pb} $clip={s.clip}>{previewText[s.n.trim()] ?? "AaBbCcDd"}</Preview>
                  <StyleName>{s.n}</StyleName>
                </StyleItem>
              ))}
              <GalleryScroll>
                <ScrollPart $h={26} $off><svg width="6" height="4"><path d="M0 4l3-3 3 3z" fill="#bbb" /></svg></ScrollPart>
                <ScrollPart $h={24}><svg width="7" height="4"><path d="M0 0l3.5 4L7 0z" fill="#666" /></svg></ScrollPart>
                <ScrollPart $h={24}><svg width="8" height="9"><path d="M0 0h8v1.2H0zM0 4h8L4 9z" fill="#666" /></svg></ScrollPart>
              </GalleryScroll>
            </Gallery>
          </GroupBody>
          <GroupLabel><LabelText>Styles</LabelText><Launcher><Launch /></Launcher></GroupLabel>
        </Group>
        <Group $w={111}>
          <GroupBody>
            <Stack>
              <EditRow><ClipIcon><FindI /></ClipIcon>Find<Cell $w={8} $ml={15}><Chev /></Cell></EditRow>
              <EditRow><ClipIcon><ReplaceI /></ClipIcon>Replace</EditRow>
              <EditRow><ClipIcon><SelectI /></ClipIcon>Select<Chev /></EditRow>
            </Stack>
          </GroupBody>
          <GroupLabel><LabelText>Editing</LabelText></GroupLabel>
        </Group>
        <Collapse><svg width="14" height="8" viewBox="0 0 14 8" fill="none" stroke="#555"><path d="M1 7l6-6 6 6" /></svg></Collapse>
      </Ribbon>

      <Canvas>
        <DocArea>
          <Page $stub><StubFrame>1</StubFrame></Page>
          <Page $stub $right><StubFrame>2</StubFrame></Page>
          <Page>
            <Frame>
              <Logos>
                <SandipLogo><SandipSeal /><SandipName>SANDIP</SandipName><SandipSub>FOUNDATION</SandipSub></SandipLogo>
                <SiemLogo>
                  <SiemTiny>SANDIP FOUNDATION'S</SiemTiny>
                  <SiemName>SIEM</SiemName>
                  <SiemSub>INSTITUTE OF ENGINEERING &amp; MANAGEMENT</SiemSub>
                  <SiemWing width="18" height="18" viewBox="0 0 18 18"><path d="M9 9L3 2l1 7zM9 9l7-6-2 8zM9 9l-4 6 5-2zM9 9l5 6-2-6z" fill="#4f93b8" /></SiemWing>
                </SiemLogo>
              </Logos>
              <Heading>ACKNOWLEDGEMENT</Heading>
              <Body>
                <Para>
                  <JLine>It gives me an immense pleasure to submit this seminar report on <b>WIND HARVESTING.</b> I</JLine>
                  <div>tried my level best to present this topic into compact and to the point framework.</div>
                  <JLine>I wish to express my sincere thanks with profound gratitude to my guide <b>PROF.P.<Sq $b>M.SUTAR</Sq></b></JLine>
                  <JLine>for his valuable guidance and constant encouragement without which it would have been</JLine>
                  <div>impossible for me to present and complete this seminar.</div>
                  <JLine $ws={-0.7}>I would like to extend my sincere thanks to my <b>HOD DR.A.<Sq $b>S.DUBE</Sq></b> for the facilities provided</JLine>
                  <div>to me. And I grateful thanks to <b><Sq>Hon.D.P.PATIL</Sq>.</b></div>
                  <JLine $ws={-0.2}>Above all, I thank almighty for everything <Sq>i</Sq> have received in my life apologies to those whose</JLine>
                  <div>help is not <Sq $b>acknowledge</Sq>.</div>
                </Para>
              </Body>
              <Sig>
                <div>GHADOJE SHUBHAM BABAJI</div>
                <div>SEAT <Sq $b>NO.:</Sq> T150830850</div>
                <div>VI SEMESTER MECH.</div>
                <SigShift><Sq $b>SIEM,MAHIRAVANI</Sq> (NASHIK)</SigShift>
              </Sig>
            </Frame>
          </Page>
          <Page $right>
            <Frame>
              <Table>
                <colgroup><col width="65" /><col width="298" /><col width="113" /></colgroup>
                <tbody>
                  <tr>
                    <Td><CellBox $h={17}><Head $ml={1}>SR NO</Head></CellBox></Td>
                    <Td><CellBox $h={17}><Head $ml={-1}>INDEX</Head></CellBox></Td>
                    <Td><CellBox $h={17}><Head $ml={1}>PAGE NO.</Head></CellBox></Td>
                  </tr>
                  {rows.map((r, i) => (
                    <tr key={i}>
                      <Td><CellBox $h={r.h}><Sr $b={r.bold}>{r.sr}</Sr></CellBox></Td>
                      <Td><CellBox $h={r.h}>{r.lines.map((l, j) => <Line key={j}>{l}</Line>)}</CellBox></Td>
                      <Td><CellBox $h={r.h} $center>{r.pg}</CellBox></Td>
                    </tr>
                  ))}
                </tbody>
              </Table>
            </Frame>
          </Page>
        </DocArea>
        <Scrollbar>
          <SbBtn $h={18}><svg width="10" height="6"><path d="M0 6l5-5 5 5z" fill="#666" /></svg></SbBtn>
          <SbTrack><SbThumb /></SbTrack>
          <SbBtn $h={20}><svg width="10" height="6"><path d="M0 0l5 5 5-5z" fill="#666" /></svg></SbBtn>
        </Scrollbar>
        <PageTip>Page: 1</PageTip>
      </Canvas>

      <Status>
        <StatusText $ml={10}>Page 2 of 29</StatusText>
        <StatusText $ml={26}>5509 words</StatusText>
        <StatusText $ml={25}><svg width="16" height="16" viewBox="0 0 16 16" fill="none" stroke="#777"><path d="M6 1H1v12h5M10 1h5v12h-5M8 0v16M11 4l3 4M14 4l-3 4" /></svg></StatusText>
        <StatusText $ml={24}>English (United States)</StatusText>
        <Grow />
        <ViewBtn $w={50}><ReadI /></ViewBtn>
        <ViewBtn $w={50} $on><PrintI /></ViewBtn>
        <ViewBtn $w={50}><WebI /></ViewBtn>
        <Cell $w={12} $ml={8}><svg width="11" height="2"><rect width="11" height="1.2" fill="#555" /></svg></Cell>
        <Slider><Thumb /><Tick /></Slider>
        <Cell $w={12}><svg width="11" height="11"><path d="M0 5.5h11M5.5 0v11" stroke="#555" /></svg></Cell>
        <StatusText $ml={15}>63%</StatusText>
        <StatusText $ml={19}> </StatusText>
      </Status>

      <Taskbar>
        <TbCell $w={60}><WinLogo /></TbCell>
        <SearchBox><Search size={24} strokeWidth={1.2} color="#222" style={{ transform: "scaleX(-1)" }} />Type here to search</SearchBox>
        <TbCell $w={60}><svg width="20" height="20"><circle cx="10" cy="10" r="8" fill="none" stroke="#fff" strokeWidth="2.4" /></svg></TbCell>
        <TbCell $w={62}><TaskView /></TbCell>
        <AppCell $open><Folder /></AppCell>
        <AppCell><Sublime /></AppCell>
        <AppCell><Xampp /></AppCell>
        <AppCell $open $active $pl={1}><WordI /></AppCell>
        <AppCell $open $pl={6}><Chrome /></AppCell>
        <Grow />
        <TbCell $w={35}><Help /></TbCell>
        <TbCell $w={30}><svg width="16" height="9" viewBox="0 0 16 9" fill="none" stroke="#fff" strokeWidth="1.1"><path d="M1 8l7-7 7 7" /></svg></TbCell>
        <TbCell $w={30}><Battery /></TbCell>
        <TbCell $w={30}><Globe /></TbCell>
        <TbCell $w={30}><Speaker /></TbCell>
        <Eng>ENG</Eng>
        <Clock><div>21:01</div><div>28-05-2021</div></Clock>
        <TbCell $w={56}><Notif /></TbCell>
        <DeskEdge />
      </Taskbar>
    </Shell>
  );
}
